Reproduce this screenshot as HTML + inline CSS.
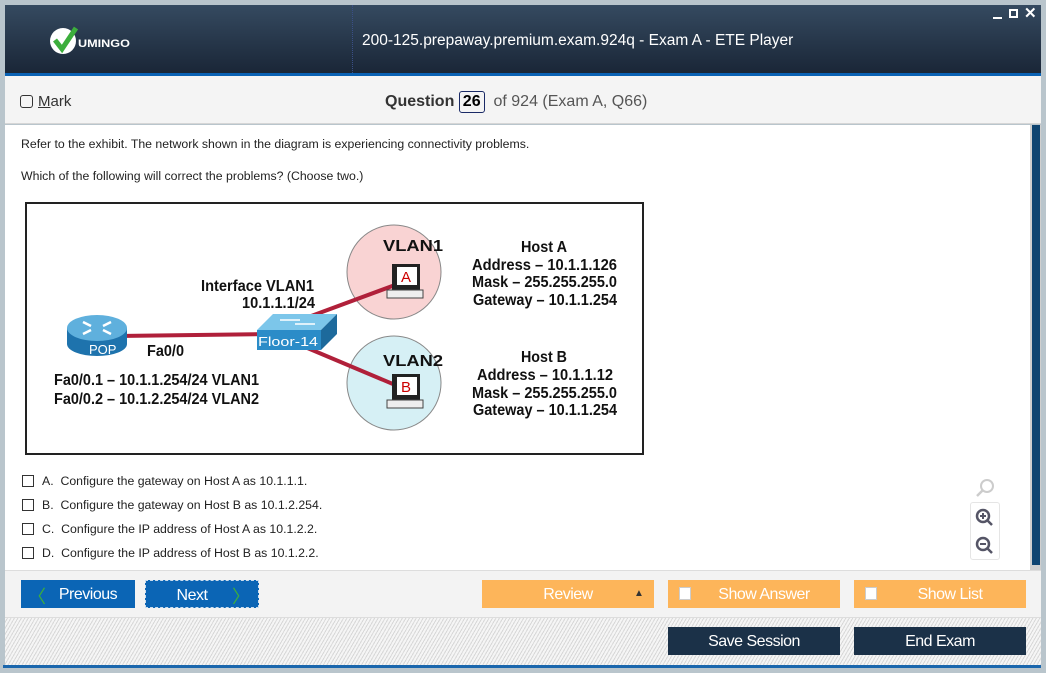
<!DOCTYPE html>
<html><head><style>
*{margin:0;padding:0;box-sizing:border-box}
body{width:1046px;height:673px;background:#b9c5cc;font-family:"Liberation Sans",sans-serif;position:relative;overflow:hidden}
.a{position:absolute}
.hdr{left:5px;top:5px;width:1036px;height:68px;background:linear-gradient(#354a60,#1a2637)}
.btn{position:absolute;color:#fff;font-size:16px;text-align:center;line-height:30px;height:28px;font-family:"Liberation Sans",sans-serif;letter-spacing:-0.5px}
.opt{position:absolute;left:22px;font-size:12.3px;color:#222}
.opt i{display:inline-block;width:12px;height:12px;border:1px solid #333;vertical-align:-2px;margin-right:8px}
.d text{font-family:"Liberation Sans",sans-serif;font-weight:bold;font-size:16px;fill:#111}
</style></head><body>
<div class="a hdr"></div>
<div class="a" style="left:352px;top:5px;width:1px;height:68px;border-left:1px dotted #3a4f86"></div>
<svg class="a" style="left:48px;top:22px" width="100" height="34"><circle cx="15" cy="19" r="13" fill="#fff"/><path d="M7 18 L14 27 L28 6" stroke="#3cae3c" stroke-width="5" fill="none"/><text x="30" y="25" fill="#fff" font-size="11" font-weight="bold" font-family="Liberation Sans" textLength="52" lengthAdjust="spacingAndGlyphs">UMINGO</text></svg>
<div class="a" style="left:362px;top:32px;color:#fff;font-size:15.5px">200-125.prepaway.premium.exam.924q - Exam A - ETE Player</div>
<div class="a" style="left:993px;top:17px;width:9px;height:2px;background:#fff"></div>
<div class="a" style="left:1009px;top:9px;width:9px;height:9px;border:2px solid #fff"></div>
<div class="a" style="left:1024px;top:4px;color:#fff;font-size:15px;font-weight:bold">✕</div>
<div class="a" style="left:5px;top:73px;width:1036px;height:3px;background:#0a62b4"></div>
<div class="a" style="left:5px;top:76px;width:1036px;height:48px;background:#f4f4f4;border-bottom:1px solid #d6d6d6"></div>
<div class="a" style="left:20px;top:95px;width:13px;height:13px;border:1.5px solid #333;border-radius:3px"></div>
<div class="a" style="left:38px;top:93px;font-size:15px;color:#333"><u>M</u>ark</div>
<div class="a" style="left:385px;top:91px;font-size:16px;color:#333"><b>Question</b> <span style="display:inline-block;border:1.5px solid #1a2a66;border-radius:3px;padding:1px 3px;color:#000;font-weight:bold">26</span> &nbsp;<span style="color:#555">of 924 (Exam A, Q66)</span></div>
<div class="a" style="left:5px;top:125px;width:1036px;height:445px;background:#fff"></div>
<div class="a" style="left:1030px;top:125px;width:11px;height:445px;background:#cfcfcf"></div>
<div class="a" style="left:1032px;top:125px;width:8px;height:440px;background:#0e4471"></div>
<div class="a" style="left:21px;top:137px;font-size:12.3px;color:#222">Refer to the exhibit. The network shown in the diagram is experiencing connectivity problems.</div>
<div class="a" style="left:21px;top:169px;font-size:12.3px;color:#222">Which of the following will correct the problems? (Choose two.)</div>
<svg class="a" style="left:25px;top:202px" width="620" height="254">
<rect x="1" y="1" width="617" height="251" fill="#fff" stroke="#222" stroke-width="2"/>
<circle cx="369" cy="70" r="47" fill="#f9d3d3" stroke="#888"/>
<circle cx="369" cy="181" r="47" fill="#d6f0f5" stroke="#888"/>
<line x1="95" y1="134" x2="245" y2="132" stroke="#b0203a" stroke-width="4"/>
<line x1="270" y1="120" x2="370" y2="83" stroke="#b0203a" stroke-width="4"/>
<line x1="280" y1="145" x2="375" y2="185" stroke="#b0203a" stroke-width="4"/>
<ellipse cx="72" cy="142" rx="30" ry="12" fill="#1e73ad"/>
<rect x="42" y="126" width="60" height="16" fill="#1e73ad"/>
<ellipse cx="72" cy="126" rx="30" ry="13" fill="#5fb0dd"/>
<path d="M58 120l8 4M86 120l-8 4M58 132l8-4M86 132l-8-4" stroke="#fff" stroke-width="2.5"/>
<text x="64" y="152" fill="#fff" font-size="13" font-family="Liberation Sans">POP</text>
<polygon points="232,128 248,112 312,112 296,128" fill="#7cc6ea"/>
<path d="M255 118h20M270 122h20" stroke="#fff" stroke-width="1.5"/>
<rect x="232" y="128" width="64" height="20" fill="#2b8cc8"/>
<polygon points="296,128 312,112 312,132 296,148" fill="#1d6a9c"/>
<text x="233" y="144" fill="#fff" font-size="13" font-family="Liberation Sans" textLength="60" lengthAdjust="spacingAndGlyphs">Floor-14</text>
<rect x="367" y="62" width="28" height="26" fill="#222"/><rect x="372" y="65" width="20" height="18" fill="#fff"/><text x="376" y="80" fill="#c00" font-size="15" font-family="Liberation Sans">A</text><rect x="362" y="88" width="36" height="8" fill="#eee" stroke="#444"/>
<rect x="367" y="172" width="28" height="26" fill="#222"/><rect x="372" y="175" width="20" height="18" fill="#fff"/><text x="376" y="190" fill="#c00" font-size="15" font-family="Liberation Sans">B</text><rect x="362" y="198" width="36" height="8" fill="#eee" stroke="#444"/>
<g class="d">
<text x="358" y="49" textLength="60" lengthAdjust="spacingAndGlyphs">VLAN1</text>
<text x="358" y="164" textLength="60" lengthAdjust="spacingAndGlyphs">VLAN2</text>
<text x="176" y="89" textLength="113" lengthAdjust="spacingAndGlyphs">Interface VLAN1</text>
<text x="217" y="106" textLength="73" lengthAdjust="spacingAndGlyphs">10.1.1.1/24</text>
<text x="122" y="154" textLength="37" lengthAdjust="spacingAndGlyphs">Fa0/0</text>
<text x="29" y="183" textLength="205" lengthAdjust="spacingAndGlyphs">Fa0/0.1 – 10.1.1.254/24 VLAN1</text>
<text x="29" y="202" textLength="205" lengthAdjust="spacingAndGlyphs">Fa0/0.2 – 10.1.2.254/24 VLAN2</text>
<text x="496" y="50" textLength="46" lengthAdjust="spacingAndGlyphs">Host A</text>
<text x="447" y="68" textLength="145" lengthAdjust="spacingAndGlyphs">Address – 10.1.1.126</text>
<text x="447" y="85" textLength="145" lengthAdjust="spacingAndGlyphs">Mask – 255.255.255.0</text>
<text x="448" y="103" textLength="144" lengthAdjust="spacingAndGlyphs">Gateway – 10.1.1.254</text>
<text x="496" y="160" textLength="46" lengthAdjust="spacingAndGlyphs">Host B</text>
<text x="452" y="178" textLength="136" lengthAdjust="spacingAndGlyphs">Address – 10.1.1.12</text>
<text x="447" y="196" textLength="145" lengthAdjust="spacingAndGlyphs">Mask – 255.255.255.0</text>
<text x="448" y="213" textLength="144" lengthAdjust="spacingAndGlyphs">Gateway – 10.1.1.254</text></g>
</svg>
<div class="opt" style="top:474px"><i></i>A.&nbsp; Configure the gateway on Host A as 10.1.1.1.</div>
<div class="opt" style="top:498px"><i></i>B.&nbsp; Configure the gateway on Host B as 10.1.2.254.</div>
<div class="opt" style="top:522px"><i></i>C.&nbsp; Configure the IP address of Host A as 10.1.2.2.</div>
<div class="opt" style="top:546px"><i></i>D.&nbsp; Configure the IP address of Host B as 10.1.2.2.</div>
<svg class="a" style="left:975px;top:478px" width="22" height="22"><circle cx="12" cy="8" r="6" stroke="#ccc" stroke-width="2" fill="none"/><line x1="8" y1="12" x2="2" y2="18" stroke="#ccc" stroke-width="2.5"/></svg>
<div class="a" style="left:970px;top:502px;width:30px;height:58px;border:1px solid #e5e5e5;border-radius:3px"></div>
<svg class="a" style="left:975px;top:508px" width="20" height="48"><g stroke="#556" stroke-width="2.5" fill="none"><circle cx="8" cy="8" r="6"/><line x1="12" y1="12" x2="17" y2="17"/><circle cx="8" cy="36" r="6"/><line x1="12" y1="40" x2="17" y2="45"/></g><path d="M5 8h6M8 5v6M5 36h6" stroke="#556" stroke-width="2"/></svg>
<div class="a" style="left:5px;top:570px;width:1036px;height:47px;background:#f3f3f3;border-top:1px solid #ddd"></div>
<div class="btn" style="left:21px;top:580px;width:114px;background:#0b65b5;padding-left:20px">Previous</div>
<div class="a" style="left:28px;top:583px;color:#3cae3c;font-size:18px">〈</div>
<div class="btn" style="left:145px;top:580px;width:114px;background:#0b65b5;border:1px dashed #cde;padding-right:20px">Next</div>
<div class="a" style="left:232px;top:583px;color:#3cae3c;font-size:18px">〉</div>
<div class="btn" style="left:482px;top:580px;width:172px;background:#fdb55a">Review</div>
<div class="a" style="left:634px;top:588px;color:#333;font-size:10px">▲</div>
<div class="btn" style="left:668px;top:580px;width:172px;background:#fdb55a;padding-left:20px">Show Answer</div>
<div class="a" style="left:679px;top:587px;width:12px;height:13px;background:#fff;border:1px solid #ccc"></div>
<div class="btn" style="left:854px;top:580px;width:172px;background:#fdb55a;padding-left:20px">Show List</div>
<div class="a" style="left:865px;top:587px;width:12px;height:13px;background:#fff;border:1px solid #ccc"></div>
<div class="a" style="left:5px;top:617px;width:1036px;height:48px;background:repeating-linear-gradient(-60deg,#d8d8d8 0 1px,#f5f5f5 1px 3px);border-top:1px solid #ddd"></div>
<div class="btn" style="left:668px;top:627px;width:172px;background:#1b3148">Save Session</div>
<div class="btn" style="left:854px;top:627px;width:172px;background:#1b3148">End Exam</div>
<div class="a" style="left:3px;top:665px;width:1038px;height:3px;background:#1b67ad"></div>
</body></html>
